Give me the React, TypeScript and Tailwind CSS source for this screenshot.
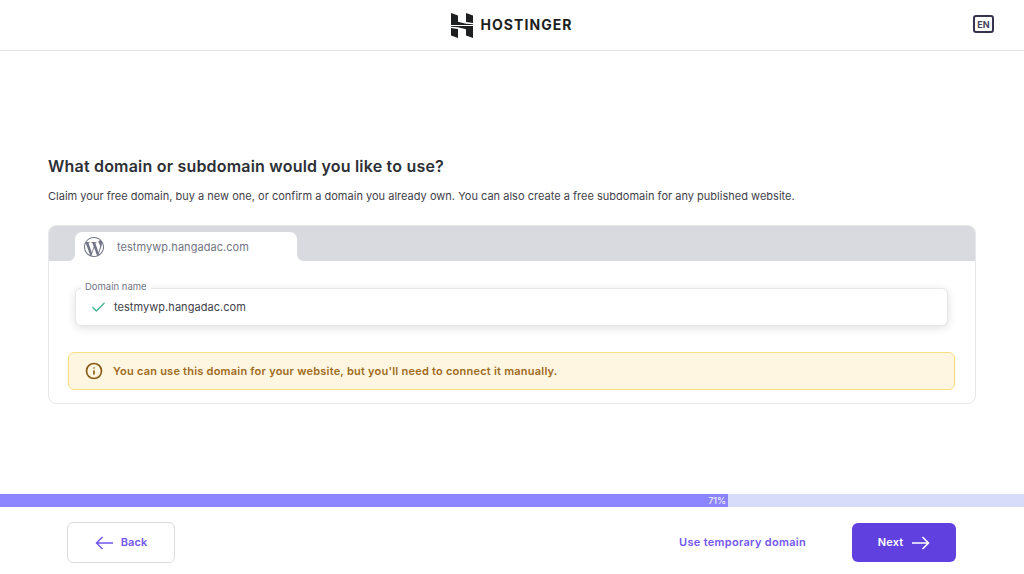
import { Check, Info } from "lucide-react";
import { SiWordpress } from "react-icons/si";

function Logo() {
  return (
    <div className="flex items-center gap-[7px]">
      <svg width="22" height="25" viewBox="0 0 22 25" fill="#1d1e20">
        <path d="M0 0l7 2.5v6.3l8 2 7 .4v.8H0z" />
        <path d="M15 0l7 2.5v7.4l-7-1z" />
        <path d="M22 25l-7-2.5v-6.3l-8-2-7-.4V13h22z" />
        <path d="M7 25l-7-2.5v-7.4l7 1z" />
      </svg>
      <span className="mb-[2px] text-[14px] font-bold tracking-[1.05px] text-[#1d1e20]">HOSTINGER</span>
    </div>
  );
}

function Arrow({ back = false }: { back?: boolean }) {
  return (
    <svg width="18" height="14" viewBox="0 0 18 14" fill="none" stroke="currentColor" strokeWidth="1.5" className={back ? "rotate-180" : ""}>
      <path d="M0 7h16.5M10.5 1l6 6-6 6" />
    </svg>
  );
}

export default function App() {
  return (
    <div className="flex h-[574px] w-[1024px] flex-col overflow-hidden bg-white font-['Inter',sans-serif] text-[#2f3138]">
      <header className="relative flex h-[51px] shrink-0 items-center justify-center border-b border-[#e3e4e8]">
        <Logo />
        <span className="absolute right-[30px] top-[15px] flex h-[18px] w-[21px] items-center justify-center rounded-[3px] border-2 border-[#36344d] pt-[1px] text-[9px] font-bold text-[#45435c]">
          EN
        </span>
      </header>

      <main className="flex-1 px-[48px] pt-[105px]">
        <h1 className="text-[16px] font-semibold leading-[20px] tracking-[0.2px] text-[#2d2f36]">
          What domain or subdomain would you like to use?
        </h1>
        <p className="mt-[12px] text-[11px] leading-[16px] tracking-[0.015px] text-[#3f414a]">
          Claim your free domain, buy a new one, or confirm a domain you already own. You can also create a free subdomain for any published website.
        </p>

        <div className="mt-[21px] h-[179px] w-[928px] rounded-[8px] border border-[#e6e7ea]">
          <div className="h-[35px] rounded-t-[7px] bg-[#d8dae0] pl-[26px] pt-[6px]">
            <div className="relative flex h-[29px] w-[222px] items-center gap-[13px] rounded-t-[7px] bg-white pl-[9px]">
              <span className="absolute bottom-0 left-[-7px] size-[7px] bg-[radial-gradient(circle_at_0_0,#d8dae0_6.5px,#ffffff_7.5px)]" />
              <span className="absolute bottom-0 right-[-7px] size-[7px] bg-[radial-gradient(circle_at_100%_0,#d8dae0_6.5px,#ffffff_7.5px)]" />
              <SiWordpress className="size-[20px] text-[#727586]" />
              <span className="pt-[1px] text-[11px] tracking-[0.05px] text-[#727586]">testmywp.hangadac.com</span>
            </div>
          </div>

          <div className="pl-[19px] pr-[20px] pt-[27px]">
            <div className="relative mx-[7px] flex h-[38px] items-center gap-[7px] rounded-[6px] border border-[#e6e7ea] bg-white pl-[14px] shadow-[0_2px_8px_rgba(29,30,32,0.14)]">
              <span className="absolute -top-[8px] left-[5px] bg-white px-[4px] text-[9.5px] leading-[12px] text-[#727586]">
                Domain name
              </span>
              <Check className="size-[17px] text-[#3fb58c]" strokeWidth={1.8} />
              <span className="text-[11px] tracking-[0.05px] text-[#3f414a]">testmywp.hangadac.com</span>
            </div>

            <div className="mt-[26px] flex h-[38px] items-center gap-[10px] rounded-[6px] border border-[#fbdd80] bg-[#fef6e0] pl-[16px]">
              <Info className="size-[18px] text-[#8a5a14]" strokeWidth={2.2} />
              <span className="text-[11px] font-semibold tracking-[0.23px] text-[#a06b1c]">
                You can use this domain for your website, but you'll need to connect it manually.
              </span>
            </div>
          </div>
        </div>
      </main>

      <div className="relative h-[13px] shrink-0 bg-[#d8dcfb]">
        <div className="flex h-full w-[728px] items-center justify-end bg-[#8c85ff] pr-[2px] text-[9px] font-medium text-white/85">
          71%
        </div>
      </div>

      <footer className="flex h-[67px] shrink-0 items-start pl-[67px] pr-[68px] pt-[15px]">
        <button className="flex h-[41px] w-[108px] items-center justify-center gap-[8px] rounded-[6px] border border-[#dadce0] text-[11px] font-semibold tracking-[0.1px] text-[#7357ee]">
          <Arrow back />
          Back
        </button>
        <button className="ml-auto mr-[46px] mt-[12px] text-[11px] font-semibold tracking-[0.3px] text-[#7357ee]">Use temporary domain</button>
        <button className="mt-[1px] flex h-[39px] w-[104px] items-center justify-center gap-[9px] rounded-[6px] bg-[#6041e0] text-[11px] font-semibold tracking-[0.1px] text-white">
          Next
          <Arrow />
        </button>
      </footer>
    </div>
  );
}
